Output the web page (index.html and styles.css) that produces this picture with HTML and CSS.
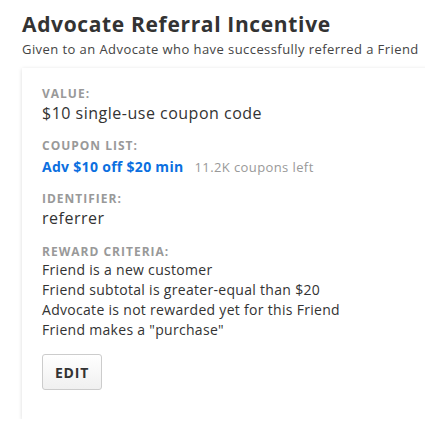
FILE: index.html
```html
<!DOCTYPE html>
<html>
<head>
<meta charset="utf-8">
<link rel="stylesheet" href="styles.css">
</head>
<body>
<div class="page">
  <h1 class="title">Advocate Referral Incentive</h1>
  <p class="subtitle">Given to an Advocate who have successfully referred a Friend</p>
  <div class="card">
    <div class="field">
      <div class="label">VALUE:</div>
      <div class="value">$10 single-use coupon code</div>
    </div>
    <div class="field field-coupon">
      <div class="label">COUPON LIST:</div>
      <div class="value coupon"><a class="link">Adv $10 off $20 min</a><span class="muted">11.2K coupons left</span></div>
    </div>
    <div class="field field-id">
      <div class="label">IDENTIFIER:</div>
      <div class="value">referrer</div>
    </div>
    <div class="field field-criteria">
      <div class="label label-tight">REWARD CRITERIA:</div>
      <ul class="criteria">
        <li>Friend is a new customer</li>
        <li>Friend subtotal is greater-equal than $20</li>
        <li>Advocate is not rewarded yet for this Friend</li>
        <li>Friend makes a "purchase"</li>
      </ul>
    </div>
    <button class="btn">EDIT</button>
  </div>
</div>
</body>
</html>
```
FILE: styles.css
```css
html, body { margin: 0; padding: 0; overflow: hidden; background: #fff; }
body { font-family: "Open Sans", "Liberation Sans", sans-serif; color: #333; }
.page { padding: 10px 0 0 22px; }
.title { margin: 0; font-size: 21px; font-weight: 700; line-height: 28px; color: #333; letter-spacing: 0.65px; }
.subtitle { margin: 2px 0 0; font-size: 13px; line-height: 18px; color: #444; letter-spacing: 0.43px; }
.card {
  margin-top: 10px;
  width: 440px;
  padding: 18px 20px 29px;
  box-sizing: border-box;
  box-shadow: 0 1px 4px rgba(0,0,0,0.15);
  background: #fff;
}
.field { margin-bottom: 14px; }
.field-coupon { margin-bottom: 13px; }
.field-id { margin-bottom: 16px; }
.field-criteria { margin-bottom: 13px; }
.label { font-size: 12px; font-weight: 700; color: #999; line-height: 16px; letter-spacing: 1px; }
.label-tight { line-height: 14px; }
.value { font-size: 16px; line-height: 22px; color: #333; letter-spacing: 0.5px; }
.coupon { font-size: 14px; display: flex; align-items: baseline; gap: 11px; letter-spacing: 0.3px; padding-top: 2px; line-height: 22px; }
.link { color: #0b6fe0; font-weight: 700; }
.muted { color: #999; font-size: 13px; letter-spacing: 0.4px; }
.criteria { list-style: none; margin: 0; padding: 1px 0 0; font-size: 14px; line-height: 20px; color: #333; letter-spacing: 0.3px; }
.btn {
  margin-top: 1px;
  width: 60px; height: 36px;
  border: 1px solid #ccc; border-radius: 3px;
  background: linear-gradient(#fff, #f0f0f0);
  font-family: inherit; font-weight: 700; font-size: 14px; color: #333;
  letter-spacing: 0.8px; padding: 0;
}
```
